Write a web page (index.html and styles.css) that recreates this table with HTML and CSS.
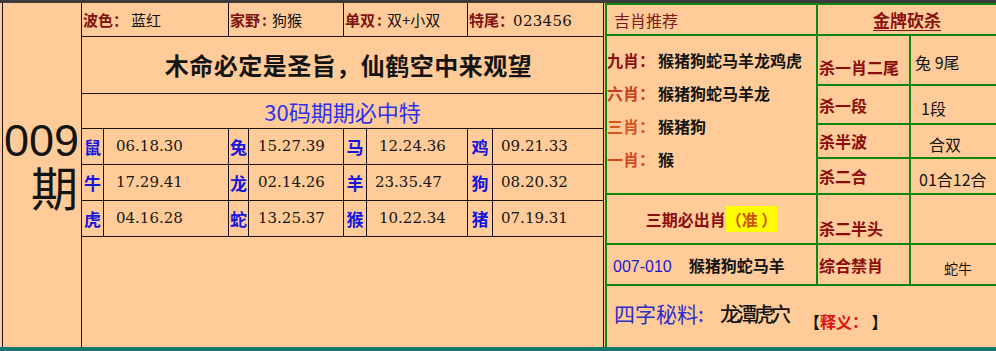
FILE: index.html
```html
<!DOCTYPE html>
<html lang="zh">
<head>
<meta charset="utf-8">
<title>009期</title>
<link rel="stylesheet" href="styles.css">
</head>
<body>
<div class="page">
  <div class="topbar"></div>
  <div class="main">
    <table class="lt">
      <colgroup>
        <col class="c0"><col class="c1"><col class="c2"><col class="c3"><col class="c4"><col class="c5"><col class="c6"><col class="c7"><col class="c8">
      </colgroup>
      <tr class="r1">
        <td class="issue" rowspan="7"><div class="num">009</div><div class="qi">期</div></td>
        <td colspan="2" class="info"><span class="lbl">波色：</span><span class="val v1">蓝红</span></td>
        <td colspan="2" class="info"><span class="lbl">家野<b class="colon">:</b></span><span class="val v2">狗猴</span></td>
        <td colspan="2" class="info"><span class="lbl">单双<b class="colon">:</b></span><span class="val">双+小双</span></td>
        <td colspan="2" class="info"><span class="lbl">特尾：</span><span class="val digits">023456</span></td>
      </tr>
      <tr class="r2">
        <td colspan="8" class="title">木命必定是圣旨，仙鹤空中来观望</td>
      </tr>
      <tr class="r3">
        <td colspan="8" class="sub">30码期期必中特</td>
      </tr>
      <tr class="zr">
        <td class="zn">鼠</td><td class="zv p1">06.18.30</td>
        <td class="zn">兔</td><td class="zv p2">15.27.39</td>
        <td class="zn">马</td><td class="zv p3">12.24.36</td>
        <td class="zn">鸡</td><td class="zv p4">09.21.33</td>
      </tr>
      <tr class="zr">
        <td class="zn">牛</td><td class="zv p1">17.29.41</td>
        <td class="zn">龙</td><td class="zv p2">02.14.26</td>
        <td class="zn">羊</td><td class="zv p3b">23.35.47</td>
        <td class="zn">狗</td><td class="zv p4">08.20.32</td>
      </tr>
      <tr class="zr">
        <td class="zn">虎</td><td class="zv p1">04.16.28</td>
        <td class="zn">蛇</td><td class="zv p2">13.25.37</td>
        <td class="zn">猴</td><td class="zv p3">10.22.34</td>
        <td class="zn">猪</td><td class="zv p4">07.19.31</td>
      </tr>
      <tr class="r7">
        <td colspan="8" class="empty"></td>
      </tr>
    </table>

    <table class="rt">
      <colgroup><col class="d0"><col class="d1"><col class="d2"></colgroup>
      <tr class="h">
        <td class="jx">吉肖推荐</td>
        <td colspan="2" class="jp"><span>金牌砍杀</span></td>
      </tr>
      <tr class="s1">
        <td rowspan="4" class="picks">
          <div class="pick"><span class="pl p9">九肖：</span>猴猪狗蛇马羊龙鸡虎</div>
          <div class="pick"><span class="pl p6">六肖：</span>猴猪狗蛇马羊龙</div>
          <div class="pick"><span class="pl p3x">三肖：</span>猴猪狗</div>
          <div class="pick"><span class="pl p1x">一肖：</span>猴</div>
        </td>
        <td class="kl low">杀一肖二尾</td>
        <td class="kv k1">兔 9尾</td>
      </tr>
      <tr class="s2">
        <td class="kl">杀一段</td>
        <td class="kv k2">1段</td>
      </tr>
      <tr class="s3">
        <td class="kl">杀半波</td>
        <td class="kv k3">合双</td>
      </tr>
      <tr class="s4">
        <td class="kl">杀二合</td>
        <td class="kv k4">01合12合</td>
      </tr>
      <tr class="s5">
        <td class="must">三期必出肖<span class="hl">（准 ）</span></td>
        <td class="kl low">杀二半头</td>
        <td class="kv"></td>
      </tr>
      <tr class="s6">
        <td class="per"><span class="pn">007-010</span><span class="pz">猴猪狗蛇马羊</span></td>
        <td class="kl">综合禁肖</td>
        <td class="kv k6">蛇牛</td>
      </tr>
      <tr class="s7">
        <td colspan="3" class="secret">
          <span class="sk">四字秘料:</span><span class="sv">龙潭虎穴</span><span class="sy">【<em>释义：</em> 】</span>
        </td>
      </tr>
    </table>
  </div>
  <div class="bottombar"></div>
</div>
</body>
</html>
```

FILE: styles.css
```css
html, body {
  margin: 0;
  padding: 0;
}
body {
  background: #ffcc99;
  width: 996px;
  height: 351px;
  overflow: hidden;
  font-family: "Noto Sans CJK SC", "Liberation Sans", sans-serif;
  color: #111;
}
.page {
  display: flex;
  flex-direction: column;
  height: 351px;
}
.topbar {
  height: 3px;
  background: #3c3c3c;
  flex: none;
}
.main {
  display: flex;
  height: 344px;
  padding-left: 2px;
  flex: none;
}
.bottombar {
  height: 4px;
  background: #13786f;
  flex: none;
}

/* ---------- left table ---------- */
.lt {
  border-collapse: collapse;
  table-layout: fixed;
  width: 601px;
  height: 344px;
  flex: none;
}
.lt td {
  border: 1px solid #1c1414;
  padding: 0;
  white-space: nowrap;
  overflow: hidden;
}
.lt tr:first-child td { border-top: none; }
.lt tr.r7 td, .lt td.issue { border-bottom: none; }
.c0 { width: 79px; }
.c1 { width: 22px; }
.c2 { width: 125px; }
.c3 { width: 20px; }
.c4 { width: 95px; }
.c5 { width: 23px; }
.c6 { width: 101px; }
.c7 { width: 25px; }
.c8 { width: 111px; }

.r1 { height: 33px; }
.r2 { height: 57px; }
.r3 { height: 35px; }
.zr { height: 36px; }
.r7 { height: 111px; }

.issue {
  vertical-align: top;
  text-align: right;
  padding-top: 118px !important;
  padding-right: 2px !important;
  color: #141414;
}
.issue .num {
  font-family: "Liberation Sans", sans-serif;
  font-size: 45px;
  line-height: 40px;
  height: 40px;
}
.issue .qi {
  font-size: 47px;
  line-height: 50px;
  height: 50px;
  margin-right: 1px;
}

.info {
  font-size: 15px;
  padding-left: 1px !important;
}
.lbl {
  color: #7d1313;
  font-weight: bold;
}
.lbl .colon { font-weight: bold; margin: 0 5px 0 2px; }
.val { color: #111; }
.v1 { margin-left: 3px; }
.digits {
  font-family: "DejaVu Serif", serif;
  font-size: 15px;
  margin-left: -1px;
  letter-spacing: 0.3px;
}

.title {
  text-align: center;
  font-size: 24px;
  font-weight: bold;
  letter-spacing: 0.5px;
  color: #141414;
  padding-left: 12px !important;
}
.sub {
  text-align: center;
  font-size: 22px;
  color: #3030f0;
  line-height: 1;
}

.zn {
  text-align: center;
  font-size: 17px;
  font-weight: bold;
  color: #1515e0;
}
.zv {
  font-family: "DejaVu Serif", serif;
  font-size: 15px;
  color: #161616;
}
.p1 { padding-left: 12px !important; }
.p2 { padding-left: 9px !important; }
.p3 { padding-left: 12px !important; }
.p3b { padding-left: 8px !important; }
.p4 { padding-left: 8px !important; }

/* ---------- right table ---------- */
.rt {
  border-collapse: collapse;
  table-layout: fixed;
  width: 391px;
  height: 344px;
  margin-left: 1px;
  flex: none;
}
.rt td {
  border: 2px solid #0d870d;
  padding: 0;
  white-space: nowrap;
  overflow: hidden;
}
.d0 { width: 211px; }
.d1 { width: 93px; }
.d2 { width: 87px; }

.h { height: 31px; }
.s1 { height: 50px; }
.s2 { height: 39px; }
.s3 { height: 34px; }
.s4 { height: 36px; }
.s5 { height: 50px; }
.s6 { height: 41px; }
.s7 { height: 63px; }

.jx {
  font-size: 16px;
  color: #7a1a1a;
  padding-left: 7px !important;
}
.jp {
  text-align: center;
  font-size: 17px;
  font-weight: bold;
  color: #8a1010;
}
.jp span {
  text-decoration: underline;
  text-underline-offset: 3px;
}

.picks {
  vertical-align: top;
  padding-top: 8px !important;
}
.pick {
  height: 33px;
  line-height: 33px;
  font-size: 16px;
  font-weight: bold;
  color: #141414;
}
.pl { margin-right: 3px; }
.p9 { color: #8d0f0f; }
.p6 { color: #c8401a; }
.p3x { color: #d9541f; }
.p1x { color: #d6481c; }

.kl {
  font-size: 16px;
  font-weight: bold;
  color: #8a0c0c;
  padding-left: 1px !important;
}
.kl.low { padding-top: 14px !important; }
.s5 .kl.low { padding-top: 18px !important; }
.kv {
  font-size: 16px;
  color: #141414;
}
.k1 { padding-left: 4px !important; padding-top: 3px !important; }
.k2 { padding-left: 10px !important; padding-top: 6px !important; }
.k3 { padding-left: 18px !important; padding-top: 5px !important; }
.k4 { padding-left: 8px !important; padding-top: 5px !important; }
.k6 { padding-left: 33px !important; padding-top: 6px !important; font-size: 14px; }

.must {
  text-align: center;
  font-size: 16px;
  font-weight: bold;
  color: #8a1010;
}
.hl {
  background: #ffff00;
  color: #d0500f;
  font-weight: bold;
  padding: 1px 0;
}

.per {
  padding-left: 6px !important;
  font-size: 16px;
}
.pn {
  font-family: "Liberation Sans", sans-serif;
  color: #1a1ad0;
  margin-right: 17px;
}
.pz {
  font-weight: bold;
  color: #141414;
}

.secret {
  padding-left: 7px !important;
  padding-bottom: 8px !important;
}
.sk {
  font-size: 21px;
  color: #2d2dc8;
}
.sv {
  font-size: 20px;
  letter-spacing: -3px;
  color: #141414;
  margin-left: 16px;
  font-weight: 500;
}
.sy {
  font-size: 16px;
  font-weight: bold;
  color: #141414;
  margin-left: 16px;
  position: relative;
  top: 6px;
}
.sy em {
  font-style: normal;
  color: #e01010;
}
```
